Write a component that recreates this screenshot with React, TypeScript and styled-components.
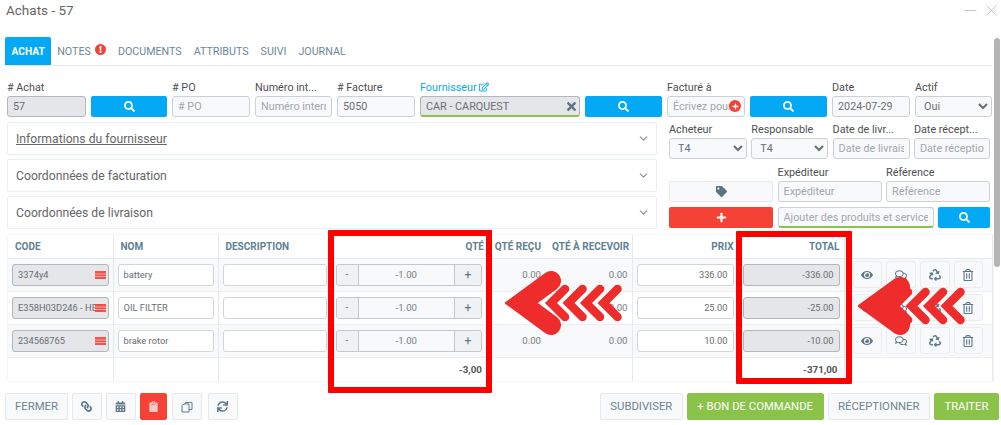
import React from "react";
import styled, { createGlobalStyle } from "styled-components";
import {
  FaSearch,
  FaLink,
  FaCalendarAlt,
  FaClipboard,
  FaSync,
  FaEye,
  FaRegComments,
  FaRecycle,
  FaRegTrashAlt,
  FaTag,
  FaPlus,
  FaTimes,
  FaRegEdit,
  FaExclamation,
} from "react-icons/fa";
import { FiChevronDown, FiX, FiMinus } from "react-icons/fi";

const GlobalStyle = createGlobalStyle`
  html, body {
    margin: 0;
    padding: 0;
    background: #fff;
    font-family: Roboto, "Liberation Sans", sans-serif;
  }
  * { box-sizing: border-box; }
  input::placeholder { color: #a3a7ab; opacity: 1; }
`;

type Line = { code: string; name: string; qty: string; price: string; total: string };

const lines: Line[] = [
  { code: "3374y4", name: "battery", qty: "-1.00", price: "336.00", total: "-336.00" },
  { code: "E358H03D246 - HEB", name: "OIL FILTER", qty: "-1.00", price: "25.00", total: "-25.00" },
  { code: "234568765", name: "brake rotor", qty: "-1.00", price: "10.00", total: "-10.00" },
];

const Flag = () => (
  <svg width="11" height="8" viewBox="0 0 11 8">
    <rect width="11" height="8" fill="#f4433c" fillOpacity="0.9" />
    <rect y="2.5" width="11" height="1" fill="#f9a8a3" />
    <rect y="5" width="11" height="1" fill="#f9a8a3" />
  </svg>
);

const CopyIcon = () => (
  <svg width="12" height="12" viewBox="0 0 12 12" fill="none" stroke="currentColor" strokeWidth="1">
    <path d="M4.5 3V1.5h4l2.5 0.01V8.5H8" />
    <path d="M1 4.5l2-1.5h5v8H1z" />
  </svg>
);

// the annotation arrows drawn over the table
const Arrow = ({ x, y, reach, rise, first }: { x: number; y: number; reach: number; rise: number; first: number }) => (
  <ArrowSvg $x={x} $y={y} width="125" height="70" viewBox="0 0 125 70">
    <polyline
      points={`${16 + reach},${33 - rise} 16,33 ${16 + reach},${33 + rise}`}
      fill="none"
      stroke="#ee2c2c"
      strokeWidth="20"
      strokeLinejoin="miter"
      strokeLinecap="round"
    />
    {[0, 1, 2, 3].map((i) => (
      <polyline
        key={i}
        points={`${first + 14 + i * 17.5},19 ${first + i * 17.5},33 ${first + 14 + i * 17.5},47`}
        fill="none"
        stroke="#ee2c2c"
        strokeWidth="8.5"
        strokeLinejoin="miter"
        strokeLinecap="round"
      />
    ))}
  </ArrowSvg>
);

export default function App() {
  return (
    <Page>
      <GlobalStyle />
      <TitleBar>
        <Title>Achats - 57</Title>
        <WindowIcons>
          <FiMinus />
          <FiX />
        </WindowIcons>
      </TitleBar>

      <Tabs>
        <Tab $active>ACHAT</Tab>
        <Tab>
          NOTES
          <Badge>
            <FaExclamation />
          </Badge>
        </Tab>
        <Tab>DOCUMENTS</Tab>
        <Tab>ATTRIBUTS</Tab>
        <Tab>SUIVI</Tab>
        <Tab>JOURNAL</Tab>
      </Tabs>

      <TopRow>
        <Field>
          <Label># Achat</Label>
          <Input $locked readOnly value="57" />
        </Field>
        <Field>
          <Label>&nbsp;</Label>
          <BlueButton>
            <FaSearch />
          </BlueButton>
        </Field>
        <Field>
          <Label># PO</Label>
          <Input placeholder="# PO" />
        </Field>
        <Field>
          <Label>Numéro int...</Label>
          <Input placeholder="Numéro interne" />
        </Field>
        <Field>
          <Label># Facture</Label>
          <Input readOnly value="5050" />
        </Field>
        <Field>
          <Label $link>
            Fournisseur <FaRegEdit />
          </Label>
          <InputWrap>
            <Input $locked $green readOnly value="CAR - CARQUEST" />
            <ClearIcon>
              <FaTimes />
            </ClearIcon>
          </InputWrap>
        </Field>
        <Field>
          <Label>&nbsp;</Label>
          <BlueButton>
            <FaSearch />
          </BlueButton>
        </Field>
        <Field>
          <Label>Facturé à</Label>
          <InputWrap>
            <Input placeholder="Écrivez pour" />
            <AddBadge>
              <FaPlus />
            </AddBadge>
          </InputWrap>
        </Field>
        <Field>
          <Label>&nbsp;</Label>
          <BlueButton>
            <FaSearch />
          </BlueButton>
        </Field>
        <Field>
          <Label>Date</Label>
          <Input readOnly value="2024-07-29" />
        </Field>
        <Field>
          <Label>Actif</Label>
          <Select>
            <option>Oui</option>
          </Select>
        </Field>
      </TopRow>

      <MiddleRow>
        <Accordions>
          <AccordionItem>
            <AccordionTitle $underlined>Informations du fournisseur</AccordionTitle>
            <FiChevronDown />
          </AccordionItem>
          <AccordionItem>
            <AccordionTitle>Coordonnées de facturation</AccordionTitle>
            <FiChevronDown />
          </AccordionItem>
          <AccordionItem>
            <AccordionTitle>Coordonnées de livraison</AccordionTitle>
            <FiChevronDown />
          </AccordionItem>
        </Accordions>

        <SidePanel>
          <FourCols>
            <Field>
              <Label>Acheteur</Label>
              <Select>
                <option>T4</option>
              </Select>
            </Field>
            <Field>
              <Label>Responsable</Label>
              <Select>
                <option>T4</option>
              </Select>
            </Field>
            <Field>
              <Label>Date de livr...</Label>
              <Input placeholder="Date de livraison" />
            </Field>
            <Field>
              <Label>Date récept...</Label>
              <Input placeholder="Date réception" />
            </Field>
          </FourCols>
          <ThreeCols>
            <Field>
              <Label>&nbsp;</Label>
              <TagButton>
                <FaTag />
              </TagButton>
            </Field>
            <Field>
              <Label>Expéditeur</Label>
              <Input placeholder="Expéditeur" />
            </Field>
            <Field>
              <Label>Référence</Label>
              <Input placeholder="Référence" />
            </Field>
          </ThreeCols>
          <AddRow>
            <RedButton>
              <FaPlus />
            </RedButton>
            <Input $green placeholder="Ajouter des produits et services" />
            <BlueButton>
              <FaSearch />
            </BlueButton>
          </AddRow>
        </SidePanel>
      </MiddleRow>

      <LinesTable>
        <colgroup>
          <col width="105" />
          <col width="105" />
          <col width="113" />
          <col width="155" />
          <col width="59" />
          <col width="87" />
          <col width="106" />
          <col width="106" />
          <col width="148" />
        </colgroup>
        <thead>
          <tr>
            <HeadCell>CODE</HeadCell>
            <HeadCell>NOM</HeadCell>
            <HeadCell>DESCRIPTION</HeadCell>
            <HeadCell $right>QTÉ</HeadCell>
            <HeadCell $right>QTÉ REÇU</HeadCell>
            <HeadCell $right>QTÉ À RECEVOIR</HeadCell>
            <HeadCell $right>PRIX</HeadCell>
            <HeadCell $right>TOTAL</HeadCell>
            <HeadCell />
          </tr>
        </thead>
        <tbody>
          {lines.map((line) => (
            <Row key={line.code}>
              <Cell>
                <InputWrap>
                  <CellInput $locked readOnly value={line.code} />
                  <FlagSlot>
                    <Flag />
                  </FlagSlot>
                </InputWrap>
              </Cell>
              <Cell>
                <CellInput readOnly value={line.name} />
              </Cell>
              <Cell>
                <CellInput readOnly value="" />
              </Cell>
              <Cell>
                <QtyGroup>
                  <QtyButton>-</QtyButton>
                  <QtyValue>{line.qty}</QtyValue>
                  <QtyButton $large>+</QtyButton>
                </QtyGroup>
              </Cell>
              <Cell $right>0.00</Cell>
              <Cell $right>0.00</Cell>
              <Cell>
                <CellInput $alignRight readOnly value={line.price} />
              </Cell>
              <Cell>
                <CellInput $locked $alignRight readOnly value={line.total} />
              </Cell>
              <Cell>
                <RowActions>
                  <RowAction>
                    <FaEye />
                  </RowAction>
                  <RowAction>
                    <FaRegComments />
                  </RowAction>
                  <RowAction>
                    <FaRecycle />
                  </RowAction>
                  <RowAction>
                    <FaRegTrashAlt />
                  </RowAction>
                </RowActions>
              </Cell>
            </Row>
          ))}
          <TotalRow>
            <td />
            <td />
            <td />
            <TotalCell>-3,00</TotalCell>
            <td />
            <td />
            <td />
            <TotalCell $wide>-371,00</TotalCell>
            <td />
          </TotalRow>
        </tbody>
      </LinesTable>

      <Footer>
        <FooterGroup>
          <FooterButton>FERMER</FooterButton>
          <IconButton>
            <LinkGlyph />
          </IconButton>
          <IconButton>
            <FaCalendarAlt />
          </IconButton>
          <IconButton $danger>
            <PaleClipboard />
          </IconButton>
          <IconButton $shift={1}>
            <CopyIcon />
          </IconButton>
          <IconButton $shift={2}>
            <FaSync />
          </IconButton>
        </FooterGroup>
        <ActionGroup>
          <FooterButton>SUBDIVISER</FooterButton>
          <FooterButton $green>+ BON DE COMMANDE</FooterButton>
          <FooterButton>RÉCEPTIONNER</FooterButton>
          <FooterButton $green>TRAITER</FooterButton>
        </ActionGroup>
      </Footer>

      <Scrollbar />
      <RedBox $x={328} $y={230} $w={164} $h={163} />
      <RedBox $x={736} $y={231} $w={116} $h={153} />
      <Arrow x={505} y={270} reach={30} rise={22} first={46} />
      <Arrow x={858} y={273} reach={26} rise={19} first={36} />
    </Page>
  );
}

const Page = styled.div`
  position: relative;
  width: 1001px;
  height: 425px;
  overflow: hidden;
  background: #fff;
  padding: 0 9px 0 5px;
  color: #555;
`;

const TitleBar = styled.div`
  height: 37px;
  display: flex;
  justify-content: space-between;
  padding: 1px 0 0 1px;
`;

const Title = styled.div`
  font-size: 13.5px;
  line-height: 18px;
  color: #666;
`;

const WindowIcons = styled.div`
  display: flex;
  gap: 2px;
  height: 18px;
  margin-right: -9px;
  font-size: 19px;
  color: #b5b9bd;
  align-items: center;

  svg {
    stroke-width: 1;
  }
`;

const Tabs = styled.div`
  display: flex;
  height: 29px;
  border-bottom: 1px solid #e6e9ec;
`;

const Tab = styled.div<{ $active?: boolean }>`
  position: relative;
  height: 28px;
  padding: 0 ${(p) => (p.$active ? "6.5px" : "6px")};
  display: flex;
  align-items: center;
  font-size: ${(p) => (p.$active ? "10.2px" : "10.7px")};
  color: ${(p) => (p.$active ? "#fff" : "#6d8798")};
  font-weight: ${(p) => (p.$active ? 700 : 400)};
  background: ${(p) => (p.$active ? "#03a9f4" : "transparent")};
  border-radius: 2px 2px 0 0;
`;

const Badge = styled.span`
  width: 11px;
  height: 11px;
  margin: -4px 0 0 4px;
  border-radius: 50%;
  background: #f44336;
  color: #fff;
  font-size: 7px;
  display: flex;
  align-items: center;
  justify-content: center;
`;

const TopRow = styled.div`
  display: grid;
  grid-template-columns: 79px 76px 78px 77px 78px 160px 77px 78px 77px 78px 77px;
  column-gap: 5px;
  margin: 14px 0 0 2px;
`;

const Field = styled.div`
  min-width: 0;
`;

const Label = styled.div<{ $link?: boolean }>`
  height: 16px;
  font-size: 10.8px;
  line-height: 15px;
  white-space: nowrap;
  color: ${(p) => (p.$link ? "#03a9f4" : "#4c4f52")};

  svg {
    font-size: 10px;
    vertical-align: -1px;
  }
`;

const Input = styled.input<{ $locked?: boolean; $green?: boolean }>`
  display: block;
  width: 100%;
  height: 21px;
  padding: 0 5px;
  font-family: Roboto, "Liberation Sans", sans-serif;
  font-size: 10.8px;
  color: #6a6f73;
  background: ${(p) => (p.$locked ? "#e4e6ea" : "#f8f9fa")};
  border: 1px solid ${(p) => (p.$locked ? "#b4b6b8" : "#ced1d4")};
  border-bottom: ${(p) => (p.$green ? "2px solid #8bc34a" : undefined)};
  border-radius: 3px;
  outline: none;
`;

const InputWrap = styled.div`
  position: relative;
`;

const ClearIcon = styled.span`
  position: absolute;
  top: 4px;
  right: 2px;
  font-size: 13px;
  line-height: 13px;
  color: #5c7482;
`;

const AddBadge = styled.span`
  position: absolute;
  top: 4px;
  right: 4px;
  width: 12px;
  height: 12px;
  border-radius: 50%;
  background: #f44336;
  color: #fff;
  font-size: 7px;
  display: flex;
  align-items: center;
  justify-content: center;
`;

const BlueButton = styled.button`
  display: flex;
  align-items: center;
  justify-content: center;
  width: 100%;
  height: 21px;
  padding: 0;
  border: none;
  border-radius: 2px;
  background: #03a9f4;
  color: #fff;
  font-size: 11px;
`;

const Select = styled.select`
  display: block;
  width: 100%;
  height: 21px;
  padding: 0 0 0 4px;
  font-family: Roboto, "Liberation Sans", sans-serif;
  font-size: 10.8px;
  color: #6a6f73;
  background: #f8f9fa;
  border: 1px solid #ced1d4;
  border-radius: 3px;
`;

const MiddleRow = styled.div`
  display: flex;
  margin: 5px 0 0 2px;
`;

const Accordions = styled.div`
  width: 650px;
  display: flex;
  flex-direction: column;
  gap: 4px;
`;

const AccordionItem = styled.div`
  height: 33px;
  padding: 0 6px 0 8px;
  display: flex;
  align-items: center;
  justify-content: space-between;
  border: 1px solid #e8f0f4;
  border-radius: 2px;
  color: #8a8f93;
  font-size: 13px;
`;

const AccordionTitle = styled.span<{ $underlined?: boolean }>`
  font-size: 12.2px;
  color: #666;
  text-decoration: ${(p) => (p.$underlined ? "underline" : "none")};
`;

const SidePanel = styled.div`
  width: 321px;
  margin-left: 12px;
  display: flex;
  flex-direction: column;
`;

const FourCols = styled.div`
  display: grid;
  grid-template-columns: 78px 77px 77px 76px;
  column-gap: 4.3px;
`;

const ThreeCols = styled.div`
  display: grid;
  grid-template-columns: 104px 104px 104px;
  column-gap: 4.5px;
  margin-top: 6px;
`;

const AddRow = styled.div`
  display: grid;
  grid-template-columns: 104px 156px 52px;
  column-gap: 4.5px;
  margin-top: 5px;
`;

const TagButton = styled.button`
  display: flex;
  align-items: center;
  justify-content: center;
  width: 100%;
  height: 21px;
  border: 1px solid #e6e9ec;
  border-radius: 2px;
  background: #f8f9fa;
  color: #5c7482;
  font-size: 11px;
`;

const RedButton = styled(BlueButton)`
  background: #f44336;
`;

const LinesTable = styled.table`
  width: 984px;
  margin: 6px 0 0 3px;
  border-collapse: collapse;
  table-layout: fixed;
  box-shadow: 0 0 2px rgba(120, 135, 150, 0.25);
`;

const HeadCell = styled.th<{ $right?: boolean }>`
  height: 23px;
  padding: 0 4px 0 7px;
  font-size: 10px;
  font-weight: 700;
  color: #5f7f95;
  text-align: ${(p) => (p.$right ? "right" : "left")};
  border-right: 1px solid #e6e9ec;
  border-bottom: 1px solid #e6e9ec;
  white-space: nowrap;

  &:nth-child(4) {
    padding-right: 2px;
    border-right: none;
  }
  &:nth-child(5) {
    border-right: none;
  }
`;

const Row = styled.tr`
  height: 33px;
  border-bottom: 1px solid #eceef0;

  &:nth-child(odd) {
    background: #f8f9fa;
  }
`;

const Cell = styled.td<{ $right?: boolean }>`
  padding: 0 4px;
  font-size: 9.6px;
  color: #7a7d80;
  text-align: ${(p) => (p.$right ? "right" : "left")};
  border-right: 1px solid #e6e9ec;

  &:nth-child(4),
  &:nth-child(5) {
    border-right: none;
  }
`;

const CellInput = styled.input<{ $locked?: boolean; $alignRight?: boolean }>`
  display: block;
  width: 100%;
  height: 22px;
  padding: 0 5px;
  font-family: Roboto, "Liberation Sans", sans-serif;
  font-size: 9.3px;
  color: #6a6d70;
  text-align: ${(p) => (p.$alignRight ? "right" : "left")};
  background: ${(p) => (p.$locked ? "#e4e6ea" : "#fff")};
  border: 1px solid ${(p) => (p.$locked ? "#b4b6b8" : "#d2d4d6")};
  border-radius: 3px;
  outline: none;
`;

const FlagSlot = styled.span`
  position: absolute;
  top: 7px;
  right: 3px;
  display: flex;
`;

const QtyGroup = styled.div`
  display: flex;
  height: 22px;
  border: 1px solid #c6c8ca;
  border-radius: 3px;
  overflow: hidden;
`;

const QtyButton = styled.div<{ $large?: boolean }>`
  width: ${(p) => (p.$large ? "26px" : "21px")};
  flex: none;
  display: flex;
  align-items: center;
  justify-content: center;
  background: #eff1f3;
  font-size: ${(p) => (p.$large ? "12px" : "10px")};
  color: #5f7484;
`;

const QtyValue = styled.div`
  flex: 1;
  display: flex;
  align-items: center;
  justify-content: center;
  font-size: 9.6px;
  color: #7a7d80;
  background: #f8f9fa;
  border-left: 1px solid #c6c8ca;
  border-right: 1px solid #c6c8ca;
`;

const RowActions = styled.div`
  display: flex;
  gap: 4px;
  padding-left: 4px;
`;

const RowAction = styled.div`
  width: 29.7px;
  height: 27px;
  display: flex;
  align-items: center;
  justify-content: center;
  background: #f8f9fa;
  border: 1px solid #eaecef;
  border-radius: 3px;
  color: #60788a;
  font-size: 12px;
`;

const TotalRow = styled.tr`
  height: 24px;

  td {
    border-right: 1px solid #e6e9ec;
  }
  td:nth-child(4),
  td:nth-child(5) {
    border-right: none;
  }
`;

const TotalCell = styled.td<{ $wide?: boolean }>`
  padding: 0 ${(p) => (p.$wide ? "6px" : "4px")} 0 0;
  font-size: 9.8px;
  font-weight: 700;
  text-align: right;
  color: #555;
`;

const Footer = styled.div`
  display: flex;
  justify-content: space-between;
  margin: 12px -7px 0 0;
`;

const FooterGroup = styled.div`
  display: flex;
  gap: 4px;
`;

const FooterButton = styled.button<{ $green?: boolean }>`
  height: 27px;
  padding: 0 9px;
  font-family: Roboto, "Liberation Sans", sans-serif;
  font-size: 11.3px;
  color: ${(p) => (p.$green ? "#fff" : "#6c8494")};
  background: ${(p) => (p.$green ? "#8bc34a" : "#f8f9fa")};
  border: 1px solid ${(p) => (p.$green ? "#8bc34a" : "#e6e9ec")};
  border-radius: 2px;
`;

const ActionGroup = styled(FooterGroup)`
  ${FooterButton} {
    padding: 0 9.5px;
  }
`;

const IconButton = styled.button<{ $danger?: boolean; $shift?: number }>`
  width: ${(p) => (p.$danger ? "27px" : "30px")};
  height: 27px;
  margin-left: ${(p) => p.$shift ?? 0}px;
  padding: 0;
  display: flex;
  align-items: center;
  justify-content: center;
  font-size: 11px;
  color: ${(p) => (p.$danger ? "#fff" : "#60788a")};
  background: ${(p) => (p.$danger ? "#f44336" : "#f8f9fa")};
  border: 1px solid ${(p) => (p.$danger ? "#f44336" : "#e6e9ec")};
  border-radius: 2px;
`;

const LinkGlyph = styled(FaLink)`
  transform: scaleX(-1);
`;

const PaleClipboard = styled(FaClipboard)`
  opacity: 0.72;
`;

const Scrollbar = styled.div`
  position: absolute;
  top: 38px;
  right: 1px;
  width: 6px;
  height: 229px;
  border-radius: 3px;
  background: #b4b4b4;
`;

const RedBox = styled.div<{ $x: number; $y: number; $w: number; $h: number }>`
  position: absolute;
  left: ${(p) => p.$x}px;
  top: ${(p) => p.$y}px;
  width: ${(p) => p.$w}px;
  height: ${(p) => p.$h}px;
  border: 6px solid #ff0000;
  border-radius: 1px;
`;

const ArrowSvg = styled.svg<{ $x: number; $y: number }>`
  position: absolute;
  left: ${(p) => p.$x}px;
  top: ${(p) => p.$y}px;
`;
